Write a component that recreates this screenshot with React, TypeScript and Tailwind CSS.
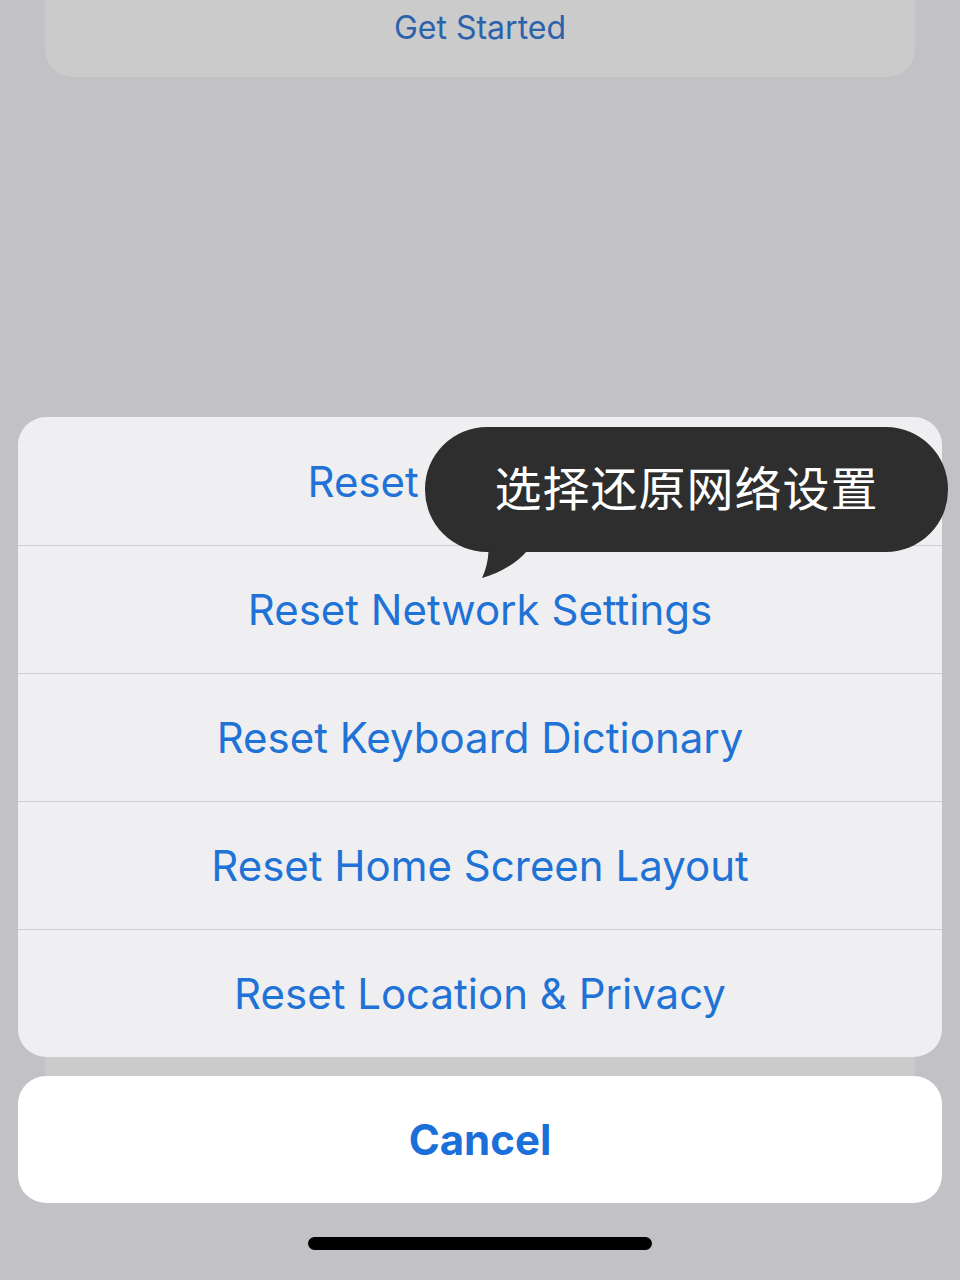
const font = { fontFamily: 'Inter, "Liberation Sans", "Noto Sans CJK SC", sans-serif' }

const rows = [
  'Reset All Settings',
  'Reset Network Settings',
  'Reset Keyboard Dictionary',
  'Reset Home Screen Layout',
  'Reset Location & Privacy',
]

export default function App() {
  return (
    <div className="relative flex h-[1280px] w-[960px] flex-col overflow-hidden bg-[#c2c2c6]" style={font}>
      {/* Card behind the dimmed overlay */}
      <div className="mx-[45px] flex h-[77px] items-start justify-center rounded-b-[28px] bg-[#cbcbcb] pt-[8px]">
        <span className="text-[32px] leading-[40px] text-[#2c62ab]">Get Started</span>
      </div>

      <div className="flex-1" />

      {/* Action sheet */}
      <div className="relative mx-[18px] flex flex-col overflow-hidden rounded-[28px] bg-[#efeff1]">
        {rows.map((label, i) => (
          <div
            key={label}
            className={`flex h-[128px] items-center justify-center text-[42px] text-[#1f72d6] ${
              i > 0 ? 'border-t-[1.5px] border-[#cfcfd3]' : ''
            }`}
          >
            {label}
          </div>
        ))}
      </div>

      {/* Strip of the card showing between the groups */}
      <div className="mx-[45px] h-[19px] bg-[#cbcbcb]" />

      <div className="mx-[18px] flex h-[127px] items-center justify-center rounded-[28px] bg-white">
        <span className="text-[42px] font-bold text-[#1a6fd8]">Cancel</span>
      </div>

      <div className="flex h-[77px] items-center justify-center pt-[4px]">
        <div className="h-[13px] w-[344px] rounded-full bg-black" />
      </div>

      {/* Speech bubble overlay */}
      <div className="absolute left-[425px] top-[427px] flex h-[125px] w-[523px] items-center justify-center rounded-[62px] bg-[#2e2e2e]">
        <span className="text-[47px] tracking-[1px] text-white">选择还原网络设置</span>
      </div>
      <svg className="absolute left-[470px] top-[540px]" width="70" height="40" viewBox="0 0 70 40">
        <path d="M18 0 C 20 16, 16 30, 12 38 C 28 34, 46 24, 58 10 L 58 0 Z" fill="#2e2e2e" />
      </svg>
    </div>
  )
}
